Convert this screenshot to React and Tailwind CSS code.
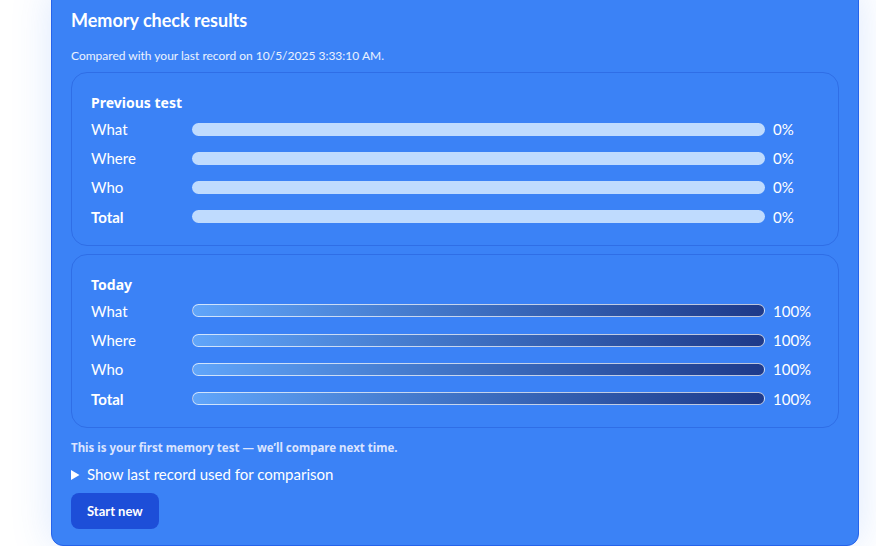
const PREVIOUS = [
  { label: "What", value: 0 },
  { label: "Where", value: 0 },
  { label: "Who", value: 0 },
  { label: "Total", value: 0, bold: true },
];

const TODAY = [
  { label: "What", value: 100 },
  { label: "Where", value: 100 },
  { label: "Who", value: 100 },
  { label: "Total", value: 100, bold: true },
];

const NOTO = { fontFamily: "'Noto Sans', Lato, sans-serif" };

function ScoreRow({ label, value, bold, filled }) {
  return (
    <div className="grid h-6 grid-cols-[93px_1fr_46px] items-center gap-2">
      <span className={bold ? "font-bold" : ""}>{label}</span>
      {filled ? (
        <div className="h-[13px] rounded-full border border-white/70 bg-gradient-to-r from-[#60a5fa] to-[#1e3a8a]" />
      ) : (
        <div className="h-[13px] rounded-full bg-[#bfdbfe]" />
      )}
      <span>{value}%</span>
    </div>
  );
}

function ScoreCard({ title, rows, filled }) {
  return (
    <section className="rounded-2xl border border-[#2f6ee6] px-[19px] pt-[20px] pb-4">
      <h3 className="text-[14px] font-bold leading-5" style={NOTO}>{title}</h3>
      <div className="mt-1 flex flex-col gap-[5.3px] text-[15px]">
        {rows.map((r) => (
          <ScoreRow key={r.label} {...r} filled={filled} />
        ))}
      </div>
    </section>
  );
}

export default function App() {
  return (
    <div className="h-[546px] overflow-hidden bg-white" style={{ fontFamily: "Lato, 'Noto Sans', sans-serif" }}>
      <div className="ml-[51px] mt-[-11px] w-[808px] rounded-b-xl border border-[#2563eb] bg-[#3b82f6] px-[19px] pt-[16px] pb-4 text-white shadow-[0_0_40px_rgba(59,130,246,0.18)]">
        <h2 className="text-[18px] font-bold leading-7">Memory check results</h2>
        <p className="mt-[14px] text-[12px] leading-4 text-white/90">
          Compared with your last record on 10/5/2025 3:33:10 AM.
        </p>
        <div className="mt-[8px] flex flex-col gap-2">
          <ScoreCard title="Previous test" rows={PREVIOUS} />
          <ScoreCard title="Today" rows={TODAY} filled />
        </div>
        <p className="mt-[12px] text-[11.5px] font-bold leading-4 text-[#dbe4ff]" style={NOTO}>
          This is your first memory test — we’ll compare next time.
        </p>
        <details className="mt-[8px] text-[15px]">
          <summary className="cursor-pointer leading-5">Show last record used for comparison</summary>
        </details>
        <button className="mt-[9px] rounded-lg bg-[#1d4ed8] px-4 py-[9px] text-[13px] font-bold leading-[18px] text-white">
          Start new
        </button>
      </div>
    </div>
  );
}
